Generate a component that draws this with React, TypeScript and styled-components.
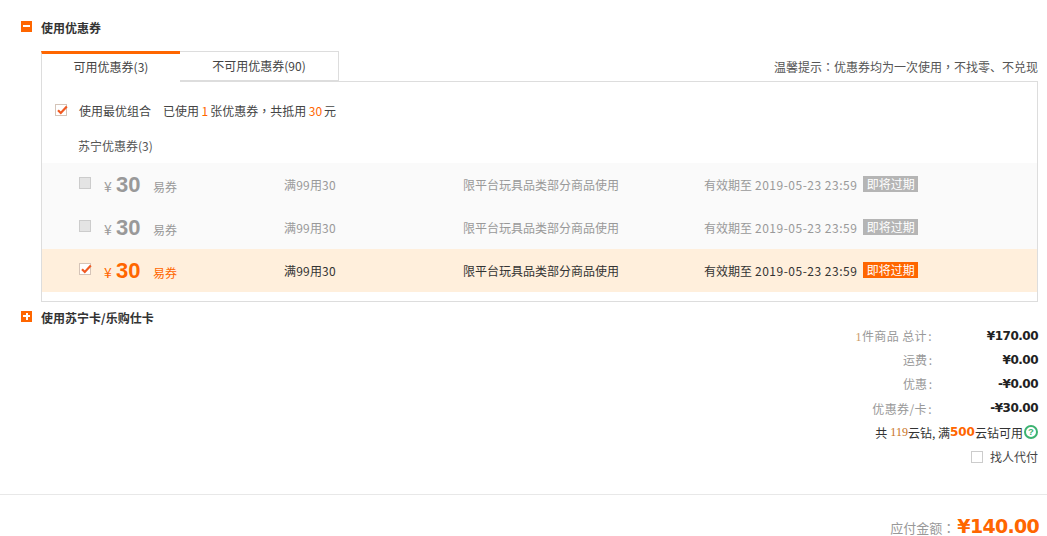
import React from "react";
import styled, { createGlobalStyle } from "styled-components";

const Global = createGlobalStyle`
  html, body { margin: 0; padding: 0; background: #fff; overflow: hidden; }
  body { font-family: "Noto Sans CJK SC", "Liberation Sans", sans-serif; font-size: 12px; color: #333; }
`;
const Page = styled.div`width: 1047px; height: 536px; overflow: hidden; position: relative;`;
const Section = styled.div`padding: 0 9px 0 21px;`;
const SectionHead = styled.div<{ $top: number }>`
  display: flex; align-items: center; gap: 9px; height: 16px; margin-top: ${p => p.$top}px;
  font-size: 12px; font-weight: 700; color: #333;
`;
const Toggle = styled.span`
  width: 11px; height: 11px; background: #f60; position: relative; flex: none; top: -1px;
  &::before { content: ""; position: absolute; left: 2px; right: 2px; top: 4px; height: 2px; background: #fff; }
`;
const TogglePlus = styled(Toggle)`
  &::after { content: ""; position: absolute; top: 2px; bottom: 2px; left: 4.5px; width: 2px; background: #fff; }
`;
const TabLine = styled.div`
  display: flex; align-items: flex-end; justify-content: space-between;
  margin: 15px 0 0 20px; height: 31px;
`;
const Tabs = styled.div`display: flex;`;
const Tab = styled.div<{ $active?: boolean }>`
  box-sizing: border-box; height: ${p => (p.$active ? 31 : 30)}px; width: ${p => (p.$active ? 139 : 159)}px;
  display: flex; align-items: center; justify-content: center; font-size: 12px; color: #444;
  background: #fff; position: relative; z-index: 1;
  border-top: ${p => (p.$active ? "3px solid #f60" : "1px solid #ddd")};
  border-left: ${p => (p.$active ? "1px solid #ddd" : "0")};
  border-right: ${p => (p.$active ? "0" : "1px solid #ddd")};
  border-bottom: ${p => (p.$active ? "0" : "1px solid #ddd")};
  margin-bottom: ${p => (p.$active ? -1 : 0)}px;
  padding-bottom: ${p => (p.$active ? 3 : 2)}px;
`;
const Tip = styled.div`font-size: 12px; color: #555; padding: 0 0 6px;`;
const Mid = styled.span`font-family: "Noto Sans CJK TC", sans-serif;`;
const Panel = styled.div`
  box-sizing: border-box; margin-left: 20px; width: 997px; height: 221px; border: 1px solid #ddd; padding-top: 19px;
`;
const BestLine = styled.div`display: flex; align-items: center; height: 18px; padding-left: 13px; color: #444; font-size: 12px;`;
const Em = styled.em`font-style: normal; color: #f60; margin: 0 2px 0 2.5px;`;
const Box = styled.span<{ $on?: boolean; $muted?: boolean }>`
  box-sizing: border-box; width: 12px; height: 12px; flex: none; position: relative; display: inline-block;
  border: 1px solid ${p => (p.$muted ? "#ccc" : "#d5c4b8")};
  background: ${p => (p.$muted ? "#e4e4e4" : "#fff")};
  svg { position: absolute; left: 0; top: -1px; }
`;
const BestText = styled.span`margin-left: 12px; margin-right: 12px;`;
const GroupTitle = styled.div`height: 18px; margin-top: 18px; padding-left: 36px; color: #555; line-height: 18px;`;
const Rows = styled.div`margin-top: 8px;`;
const Row = styled.div<{ $on?: boolean }>`
  box-sizing: border-box; height: 43px; display: grid; grid-template-columns: 62px 180px 179px 241px 1fr;
  align-items: center; padding-bottom: 1px;
  background: ${p => (p.$on ? "#ffefdc" : "#fafafa")};
  color: ${p => (p.$on ? "#333" : "#999")};
  font-size: 12px;
`;
const CheckCell = styled.div`padding: 0 0 3px 37px; display: flex;`;
const Amount = styled.div<{ $on?: boolean }>`
  display: flex; align-items: baseline; color: ${p => (p.$on ? "#f60" : "#999")}; padding-top: 1px;
`;
const Yen = styled.span`font-size: 14px; width: 12px;`;
const Big = styled.span`font-family: "Liberation Sans", Arial, sans-serif; font-size: 22px; font-weight: 700; line-height: 26px; width: 37px;`;
const Kind = styled.span`font-size: 12px;`;
const Limit = styled.div`letter-spacing: 0.2px;`;
const Expire = styled.div`display: flex; align-items: center; white-space: nowrap;`;
const DateText = styled.span`margin-left: 3px; letter-spacing: 0.5px;`;
const Badge = styled.span<{ $on?: boolean }>`
  display: block; width: 55px; height: 16px; line-height: 16px; text-align: center; margin-left: 6px; color: #fff;
  font-size: 12px; background: ${p => (p.$on ? "#f60" : "#b5b5b5")};
`;
const Summary = styled.div`position: absolute; right: 9px; top: 323.5px; width: 300px;`;
const SumRow = styled.div`
  display: flex; justify-content: flex-end; align-items: center; height: 24.2px; font-size: 12px; color: #999;
`;
const WideLabel = styled.span`letter-spacing: 0.4px;`;
const Colon = styled.span`display: inline-block; width: 5px; text-align: right;`;
const SumValue = styled.span`
  width: 106px; text-align: right; font-family: "DejaVu Sans", sans-serif; font-size: 12px; font-weight: 700; color: #222; letter-spacing: -0.5px;
`;
const Count = styled.span`color: #c96; font-family: "Liberation Serif", serif;`;
const Dark = styled.span`color: #333; display: flex; align-items: center;`;
const Diamonds = styled.span`color: #c8741d; font-family: "Liberation Serif", serif; margin: 0 0 0 3px;`;
const Bold = styled.b`color: #f60; font-family: "DejaVu Sans", sans-serif; font-size: 12px;`;
const Help = styled.svg`margin-left: 1px;`;
const PayLabel = styled.span`margin-left: 7px; color: #444;`;
const PlainBox = styled(Box)`border-color: #ccc;`;
const Divider = styled.div`position: absolute; left: 0; right: 0; top: 494px; border-top: 1px solid #e8e8e8;`;
const Total = styled.div`
  position: absolute; right: 8px; top: 516px; display: flex; align-items: baseline; height: 20px; line-height: 20px; color: #999; font-size: 13px;
`;
const TotalNum = styled.span`
  font-family: "DejaVu Sans", sans-serif; font-weight: 700; font-size: 19px; color: #f60; margin-left: 2px; letter-spacing: -0.7px;
`;

const Tick = () => (
  <svg width="12" height="12" viewBox="0 0 12 12">
    <path d="M2 6.2 L4.8 9 L10.8 2.4" fill="none" stroke="#f15a22" strokeWidth="2.2" />
  </svg>
);

const coupons = [{ on: false }, { on: false }, { on: true }];

export default function App() {
  return (
    <Page>
      <Global />
      <Section>
        <SectionHead $top={19}><Toggle />使用优惠券</SectionHead>
        <TabLine>
          <Tabs>
            <Tab $active>可用优惠券(3)</Tab>
            <Tab>不可用优惠券(90)</Tab>
          </Tabs>
          <Tip>温馨提示<Mid>：</Mid>优惠券均为一次使用<Mid>，</Mid>不找零、不兑现</Tip>
        </TabLine>
        <Panel>
          <BestLine>
            <Box $on><Tick /></Box>
            <BestText>使用最优组合</BestText>
            已使用<Em>1</Em>张优惠券<Mid>，</Mid>共抵用<Em>30</Em>元
          </BestLine>
          <GroupTitle>苏宁优惠券(3)</GroupTitle>
          <Rows>
            {coupons.map((c, i) => (
              <Row key={i} $on={c.on}>
                <CheckCell><Box $on={c.on} $muted={!c.on}>{c.on && <Tick />}</Box></CheckCell>
                <Amount $on={c.on}><Yen>¥</Yen><Big>30</Big><Kind>易券</Kind></Amount>
                <Limit>满99用30</Limit>
                <div>限平台玩具品类部分商品使用</div>
                <Expire>有效期至<DateText>2019-05-23 23:59</DateText><Badge $on={c.on}>即将过期</Badge></Expire>
              </Row>
            ))}
          </Rows>
        </Panel>
        <SectionHead $top={7}><TogglePlus />使用苏宁卡/乐购仕卡</SectionHead>
      </Section>
      <Summary>
        <SumRow><WideLabel><Count>1</Count>件商品 总计<Colon>:</Colon></WideLabel><SumValue>¥170.00</SumValue></SumRow>
        <SumRow><span>运费<Colon>:</Colon></span><SumValue>¥0.00</SumValue></SumRow>
        <SumRow><span>优惠<Colon>:</Colon></span><SumValue>-¥0.00</SumValue></SumRow>
        <SumRow><WideLabel>优惠券/卡<Colon>:</Colon></WideLabel><SumValue>-¥30.00</SumValue></SumRow>
        <SumRow>
          <Dark>共<Diamonds>119</Diamonds>云钻, 满<Bold>500</Bold>云钻可用
            <Help width="14" height="14" viewBox="0 0 14 14">
              <circle cx="7" cy="7" r="6" fill="#fff" stroke="#3cb371" strokeWidth="2" />
              <text x="7" y="10.4" textAnchor="middle" fontSize="9.5" fontWeight="700" fill="#3cb371" fontFamily="Liberation Sans">?</text>
            </Help>
          </Dark>
        </SumRow>
        <SumRow><PlainBox /><PayLabel>找人代付</PayLabel></SumRow>
      </Summary>
      <Divider />
      <Total>应付金额<Mid>：</Mid><TotalNum>¥140.00</TotalNum></Total>
    </Page>
  );
}
